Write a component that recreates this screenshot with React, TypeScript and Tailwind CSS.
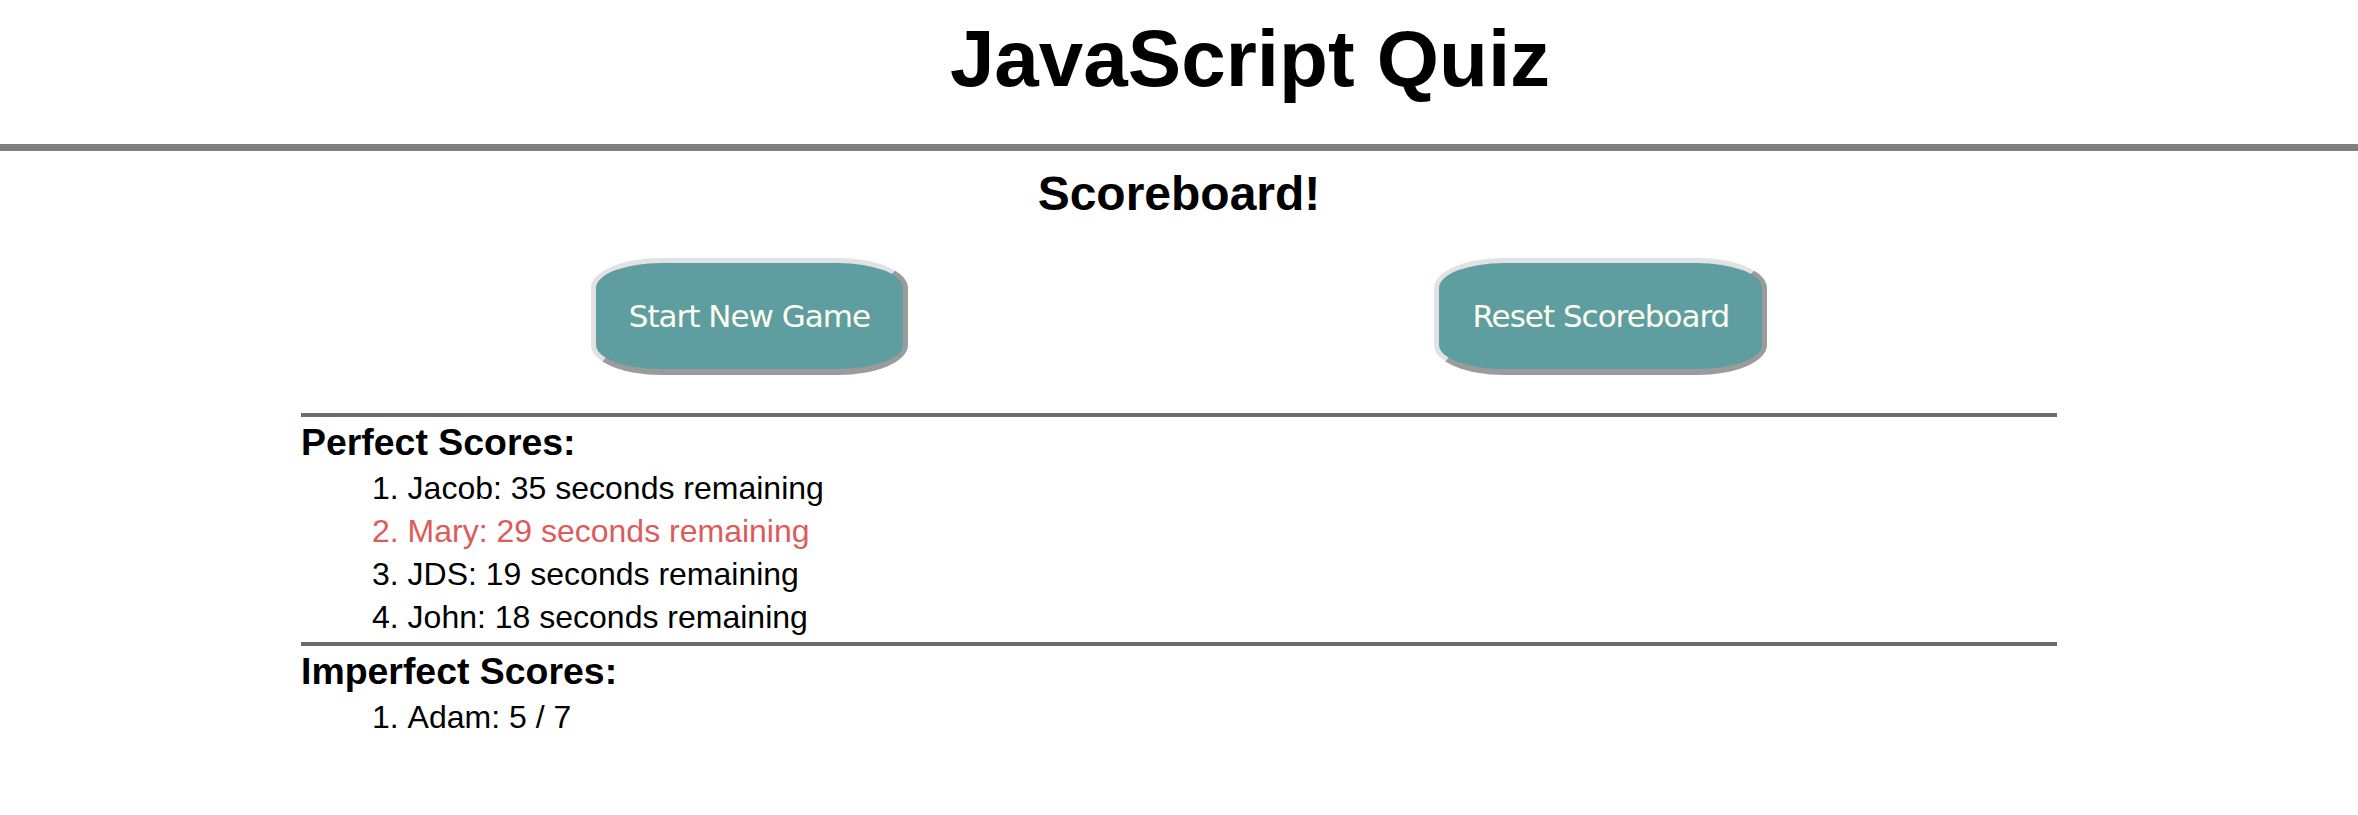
const perfectScores = [
  { name: "Jacob", time: 35 },
  { name: "Mary", time: 29, highlight: true },
  { name: "JDS", time: 19 },
  { name: "John", time: 18 },
];

const imperfectScores = [{ name: "Adam", score: "5 / 7" }];

function QuizButton({ label }: { label: string }) {
  return (
    <button className="h-[117px] px-[33px] bg-[#5f9ea0] text-[#fffff0] text-[31px] tracking-[-1px] font-['DejaVu_Sans',sans-serif] rounded-[70px/30px] border-[5px] border-b-[6px] border-t-[#e2e2e2] border-l-[#e2e2e2] border-r-[#9b9b9b] border-b-[#9b9b9b]">
      {label}
    </button>
  );
}

export default function App() {
  return (
    <div className="min-h-screen bg-white text-black font-['Liberation_Sans',Arial,sans-serif]">
      <header className="pt-[13px] pb-[39px] pl-[142px] border-b-[7px] border-[#808080]">
        <h1 className="text-center text-[80px] font-bold leading-[92px]">JavaScript Quiz</h1>
      </header>

      <h2 className="mt-[15px] text-center text-[48px] font-bold leading-[55px]">Scoreboard!</h2>

      <div className="mx-auto mt-[37px] w-[1703px] flex justify-around">
        <QuizButton label="Start New Game" />
        <QuizButton label="Reset Scoreboard" />
      </div>

      <div className="mx-auto mt-[38px] w-[1756px]">
        <div className="border-t-[4px] border-[#6b6b6b]" />
        <h3 className="mt-[4px] text-[37.44px] font-bold leading-[43px]">Perfect Scores:</h3>
        <ol className="mt-[3px] pl-[71px] list-decimal list-inside text-[32px] leading-[43px]">
          {perfectScores.map((s) => (
            <li key={s.name} className={s.highlight ? "text-[#df5a5a]" : ""}>
              {s.name}: {s.time} seconds remaining
            </li>
          ))}
        </ol>

        <div className="mt-[3px] border-t-[4px] border-[#6b6b6b]" />
        <h3 className="mt-[4px] text-[37.44px] font-bold leading-[43px]">Imperfect Scores:</h3>
        <ol className="mt-[3px] pl-[71px] list-decimal list-inside text-[32px] leading-[43px]">
          {imperfectScores.map((s) => (
            <li key={s.name}>
              {s.name}: {s.score}
            </li>
          ))}
        </ol>
      </div>
    </div>
  );
}
